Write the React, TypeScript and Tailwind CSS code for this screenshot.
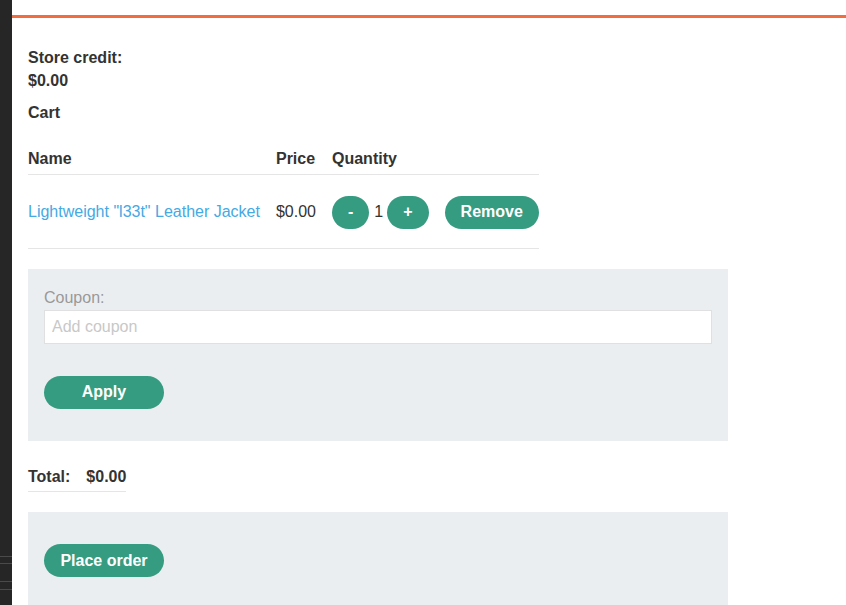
import React from 'react';

const btn =
  'inline-flex items-center justify-center rounded-full bg-[#359c81] text-white font-bold text-[16px] h-[33px] px-4 leading-none';

export default function App() {
  return (
    <div className="flex min-h-[605px] h-[605px] overflow-hidden bg-white font-['Liberation_Sans',Arial,sans-serif] text-[16px] text-[#333332]">
      {/* dark side strip */}
      <div className="w-[12px] shrink-0 bg-[#262626] flex flex-col justify-end pb-[15px]">
        <div className="h-px bg-[#4a4a4a] mb-[6px]" />
        <div className="h-px bg-[#4a4a4a] mb-[17px]" />
        <div className="h-px bg-[#4a4a4a] mb-[7px]" />
        <div className="h-px bg-[#4a4a4a]" />
      </div>

      <div className="flex-1 min-w-0">
        <div className="h-[15px]" />
        <div className="h-[3px] bg-[#f26d3e]" />

        <div className="px-4 pt-[28px]">
          <div className="font-bold leading-[23px]">
            <p>Store credit:</p>
            <p>$0.00</p>
          </div>
          <p className="font-bold leading-[23px] mt-[9px]">Cart</p>

          <table className="mt-[19px] border-collapse">
            <thead>
              <tr className="border-b border-[#e5e5e5]">
                <th className="text-left font-bold pr-4 pt-[2px] h-[31px] align-middle">Name</th>
                <th className="text-left font-bold pr-4 pt-[2px] align-middle">Price</th>
                <th className="text-left font-bold pt-[2px] align-middle">Quantity</th>
              </tr>
            </thead>
            <tbody>
              <tr className="border-b border-[#e5e5e5]">
                <td className="pr-4 pt-[2px] h-[74px] align-middle">
                  <a href="#" className="text-[#45a9e4]">
                    Lightweight "l33t" Leather Jacket
                  </a>
                </td>
                <td className="pr-4 pt-[2px] align-middle">$0.00</td>
                <td className="pt-[2px] align-middle">
                  <div className="flex items-center">
                    <button className={btn}>-</button>
                    <span className="pl-[5px] pr-[4px]">1</span>
                    <button className={btn}>+</button>
                    <button className={btn + ' ml-4'}>Remove</button>
                  </div>
                </td>
              </tr>
            </tbody>
          </table>

          <div className="mt-[20px] w-[700px] bg-[#ebeef1] px-4 pt-[17px] pb-[32px]">
            <label className="block text-[#999999] leading-[23px]">Coupon:</label>
            <input
              className="mt-px block w-full h-[34px] bg-white border border-[#e0e0e0] px-[7px] outline-none placeholder:text-[#c8c8c8]"
              placeholder="Add coupon"
            />
            <button className={btn + ' mt-[32px] w-[120px]'}>Apply</button>
          </div>

          <table className="mt-[24px] border-collapse">
            <tbody>
              <tr className="border-b border-[#e5e5e5]">
                <th className="text-left font-bold pr-[16px] h-[27px] align-top leading-[23px]">Total:</th>
                <td className="font-bold align-top leading-[23px]">$0.00</td>
              </tr>
            </tbody>
          </table>

          <div className="mt-[20px] w-[700px] bg-[#ebeef1] px-4 py-[32px]">
            <button className={btn + ' w-[120px]'}>Place order</button>
          </div>
        </div>
      </div>
    </div>
  );
}
